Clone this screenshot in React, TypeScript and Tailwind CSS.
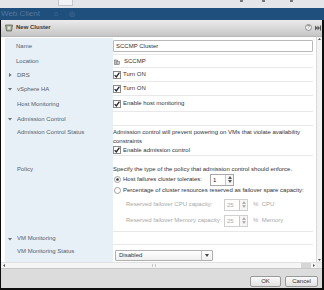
import React from "react";

const Check = () => (
  <svg width="8" height="8" viewBox="0 0 8 8" className="shrink-0">
    <rect x="0.5" y="0.5" width="7" height="7" fill="#fff" stroke="#8a8a8a" />
    <path d="M1.7 4.1 L3.3 5.9 L6.4 1.6" fill="none" stroke="#222" strokeWidth="1.3" />
  </svg>
);

const Radio = ({ on }: { on?: boolean }) => (
  <svg width="7" height="7" viewBox="0 0 7 7" className="shrink-0">
    <circle cx="3.5" cy="3.5" r="3" fill="#fff" stroke="#8a8a8a" strokeWidth="0.8" />
    {on && <circle cx="3.5" cy="3.5" r="1.3" fill="#333" />}
  </svg>
);

const Tri = ({ down }: { down?: boolean }) => (
  <svg width="4" height="4" viewBox="0 0 4 4" className="shrink-0">
    <path d={down ? "M0 1 L4 1 L2 3.5 Z" : "M1 0 L3.5 2 L1 4 Z"} fill="#6a6a6a" />
  </svg>
);

const SpinArrows = ({ dim }: { dim?: boolean }) => (
  <div className="w-[8px] h-full border-l border-[#c8c8c8] flex flex-col items-center justify-center gap-[1px] bg-[#f6f6f6]">
    <svg width="4" height="3" viewBox="0 0 4 3">
      <path d="M0 3 L2 0 L4 3 Z" fill={dim ? "#b0b0b0" : "#555"} />
    </svg>
    <svg width="4" height="3" viewBox="0 0 4 3">
      <path d="M0 0 L4 0 L2 3 Z" fill={dim ? "#b0b0b0" : "#555"} />
    </svg>
  </div>
);

const Spinner = ({ value, dim }: { value: string; dim?: boolean }) => (
  <div
    className={`w-[24px] h-[12px] border ${dim ? "border-[#d0d0d0] text-[#a8a8a8]" : "border-[#a8a8a8] text-[#222]"} bg-white flex items-stretch`}
  >
    <div className="flex-1 pl-[2px] leading-[10px]">{value}</div>
    <SpinArrows dim={dim} />
  </div>
);

const Label = ({
  text,
  arrow,
  sub,
  className = "",
}: {
  text: string;
  arrow?: "right" | "down";
  sub?: boolean;
  className?: string;
}) => (
  <div
    className={`w-[108px] shrink-0 bg-[#e7eff7] text-[#56606a] flex ${
      arrow ? "pl-[3px]" : sub ? "pl-[12px]" : "pl-[11px]"
    } ${className}`}
  >
    {arrow && (
      <span className="w-[4px] mr-[5px] flex items-center h-[9px]">
        <Tri down={arrow === "down"} />
      </span>
    )}
    <span className="leading-[9px]">{text}</span>
  </div>
);

export default function App() {
  return (
    <div className="w-[324px] h-[290px] bg-[#0e0e0e] flex flex-col overflow-hidden font-['Liberation_Sans',Arial,sans-serif] text-[6px]">
      {/* top strip */}
      <div className="h-[8px] bg-[#e3e5e8] flex items-start shrink-0">
        <div className="ml-[58px] w-[15px] h-[6px] border-x border-b border-[#c4c8cc] bg-[#f2f3f4]" />
        <div className="ml-[167px] w-[3px] h-[2px] bg-[#777]" />
        <div className="ml-[19px] w-[3px] h-[2px] bg-[#777]" />
        <div className="ml-[25px] w-[3px] h-[2px] bg-[#777]" />
      </div>
      {/* blue band */}
      <div className="h-[12px] bg-[#1f4f7c] flex items-center shrink-0 text-[#4f78a2] text-[8px] overflow-hidden">
        <span className="ml-[1px] whitespace-nowrap">Web Client</span>
        <span className="ml-[14px] text-[7px]">⌂</span>
        <span className="ml-[11px] text-[7px]">◎</span>
      </div>
      {/* dialog */}
      <div className="flex-1 ml-[1px] mr-[2px] flex flex-col bg-white min-h-0">
        {/* header */}
        <div className="h-[17px] shrink-0 bg-gradient-to-b from-[#ececec] to-[#c5c5c5] flex items-center pb-[1px] border-b border-[#b8b8b8]">
          <svg width="8" height="8" viewBox="0 0 8 8" className="ml-[4px]">
            <path d="M0.5 1 L7.5 1 L6.5 7 L1.5 7 Z" fill="#9aa58e" stroke="#5e6a55" strokeWidth="0.8" />
            <rect x="2.5" y="2.5" width="3" height="3" fill="#dfe6d6" />
          </svg>
          <span className="ml-[3px] font-bold text-[#3a3a3a] leading-[9px]">New Cluster</span>
          <div className="ml-auto flex items-center gap-[3px] mr-[1px]">
            <div className="w-[7px] h-[7px] rounded-full border border-[#8d8d8d] bg-[#f4f4f4] text-[5px] leading-[5px] text-[#666] flex items-center justify-center">
              ?
            </div>
            <svg width="6" height="6" viewBox="0 0 6 6">
              <path d="M0 0.5 L2.5 3 L0 5.5 Z M2.5 0.5 L5 3 L2.5 5.5 Z" fill="#555" />
              <rect x="5" y="0.5" width="1" height="5" fill="#555" />
            </svg>
          </div>
        </div>
        {/* body */}
        <div className="h-[225px] shrink-0 flex">
          <div className="flex-1 pl-[4px] pr-[3px] pt-[1px] flex flex-col">
            {/* Name */}
            <div className="flex h-[16px]">
              <Label text="Name" className="items-center" />
              <div className="flex-1 flex items-center">
                <div className="w-full h-[12px] border border-[#b8b8b8] rounded-[1px] pl-[2px] leading-[10px] text-[#333]">
                  SCCMP Cluster
                </div>
              </div>
            </div>
            {/* Location */}
            <div className="flex h-[14px]">
              <Label text="Location" className="items-center" />
              <div className="flex-1 flex items-center border-t border-b border-[#e8e8e8] pl-[1px] text-[#333]">
                <svg width="6" height="7" viewBox="0 0 6 7">
                  <rect x="0.5" y="2" width="3" height="4.5" fill="#b8b8b8" stroke="#777" strokeWidth="0.6" />
                  <rect x="3" y="3.5" width="2.5" height="3" fill="#d0d0d0" stroke="#777" strokeWidth="0.6" />
                </svg>
                <span className="ml-[4px] leading-[9px]">SCCMP</span>
              </div>
            </div>
            {/* DRS */}
            <div className="flex h-[14px]">
              <Label text="DRS" arrow="right" className="items-center" />
              <div className="flex-1 flex items-center border-b border-[#e8e8e8] text-[#333]">
                <Check />
                <span className="ml-[2px] leading-[9px]">Turn ON</span>
              </div>
            </div>
            {/* vSphere HA */}
            <div className="flex h-[14px]">
              <Label text="vSphere HA" arrow="down" className="items-center" />
              <div className="flex-1 flex items-center border-b border-[#e8e8e8] text-[#333]">
                <Check />
                <span className="ml-[2px] leading-[9px]">Turn ON</span>
              </div>
            </div>
            {/* Host Monitoring */}
            <div className="flex h-[16px]">
              <Label text="Host Monitoring" sub className="items-center" />
              <div className="flex-1 flex items-center border-b border-[#e8e8e8] text-[#333]">
                <Check />
                <span className="ml-[2px] leading-[9px]">Enable host monitoring</span>
              </div>
            </div>
            {/* Admission Control */}
            <div className="flex h-[14px]">
              <Label text="Admission Control" arrow="down" className="items-center" />
              <div className="flex-1 border-b border-[#e8e8e8]" />
            </div>
            {/* Admission Control Status */}
            <div className="flex h-[30px]">
              <Label text="Admission Control Status" sub className="items-start pt-[1.5px]" />
              <div className="flex-1 flex flex-col border-b border-[#e8e8e8] text-[#333] pt-[1.5px]">
                <div className="leading-[9px]">
                  Admission control will prevent powering on VMs that violate availability
                  <br />
                  constraints
                </div>
                <div className="flex items-center h-[10px]">
                  <Check />
                  <span className="ml-[2px] leading-[9px]">Enable admission control</span>
                </div>
              </div>
            </div>
            {/* Policy */}
            <div className="flex h-[76px]">
              <Label text="Policy" sub className="items-start pt-[8.5px]" />
              <div className="flex-1 flex flex-col border-b border-[#e8e8e8] text-[#333] pt-[8.5px]">
                <div className="leading-[9px] whitespace-nowrap">
                  Specify the type of the policy that admission control should enforce.
                </div>
                <div className="flex items-center h-[12px] pl-[1px]">
                  <Radio on />
                  <span className="ml-[2px] leading-[9px]">Host failures cluster tolerates:</span>
                  <div className="ml-[8px]">
                    <Spinner value="1" />
                  </div>
                </div>
                <div className="flex items-center h-[10px] pl-[1px]">
                  <Radio />
                  <span className="ml-[2px] leading-[9px] whitespace-nowrap">
                    Percentage of cluster resources reserved as failover spare capacity:
                  </span>
                </div>
                <div className="flex items-center h-[12px] mt-[3px] pl-[13px] text-[#a8a8a8]">
                  <span className="w-[98px] leading-[9px] whitespace-nowrap">Reserved failover CPU capacity:</span>
                  <Spinner value="25" dim />
                  <span className="ml-[5px] leading-[9px]">%&nbsp; CPU</span>
                </div>
                <div className="flex items-center h-[12px] mt-[4px] pl-[13px] text-[#a8a8a8]">
                  <span className="w-[98px] leading-[9px] whitespace-nowrap">Reserved failover Memory capacity:</span>
                  <Spinner value="25" dim />
                  <span className="ml-[5px] leading-[9px]">%&nbsp; Memory</span>
                </div>
              </div>
            </div>
            {/* VM Monitoring */}
            <div className="flex h-[13px]">
              <Label text="VM Monitoring" arrow="down" className="items-center" />
              <div className="flex-1 border-b border-[#e8e8e8]" />
            </div>
            {/* VM Monitoring Status */}
            <div className="flex h-[17px]">
              <Label text="VM Monitoring Status" sub className="items-start pt-[2px]" />
              <div className="flex-1 pl-[2px] pt-[5px]">
                <div className="w-[98px] h-[11px] border border-[#b0b0b0] rounded-[1px] bg-gradient-to-b from-white to-[#efefef] flex items-stretch text-[#333]">
                  <span className="flex-1 pl-[3px] leading-[9px]">Disabled</span>
                  <div className="w-[11px] border-l border-[#c4c4c4] flex items-center justify-center">
                    <svg width="4" height="3" viewBox="0 0 4 3">
                      <path d="M0 0 L4 0 L2 3 Z" fill="#444" />
                    </svg>
                  </div>
                </div>
              </div>
            </div>
          </div>
          {/* vertical scrollbar */}
          <div className="w-[6px] shrink-0 bg-[#f3f3f3] border-l border-[#dadada] flex flex-col items-center justify-between py-[1px]">
            <svg width="3" height="2" viewBox="0 0 3 2">
              <path d="M0 2 L1.5 0 L3 2 Z" fill="#555" />
            </svg>
            <svg width="3" height="2" viewBox="0 0 3 2">
              <path d="M0 0 L3 0 L1.5 2 Z" fill="#555" />
            </svg>
          </div>
        </div>
        {/* horizontal scrollbar */}
        <div className="h-[6px] shrink-0 flex items-stretch bg-[#f5f5f5] border-t border-[#e0e0e0]">
          <div className="w-[6px] flex items-center justify-center">
            <svg width="2" height="3" viewBox="0 0 2 3">
              <path d="M2 0 L0 1.5 L2 3 Z" fill="#555" />
            </svg>
          </div>
          <div className="flex-1 flex items-center justify-center">
            <div className="w-[4px] h-[3px] border-x border-[#c8c8c8]" />
          </div>
          <div className="w-[10px] bg-[#d6d6d6]" />
          <div className="w-[5px] flex items-center justify-center">
            <svg width="2" height="3" viewBox="0 0 2 3">
              <path d="M0 0 L2 1.5 L0 3 Z" fill="#555" />
            </svg>
          </div>
          <div className="w-[6px] bg-[#ececec]" />
        </div>
        {/* footer */}
        <div className="flex-1 bg-[#dcdcdc] flex items-end justify-end gap-[4px] pb-[1px] pr-[4px] border-t border-[#c8c8c8]">
          <button className="w-[31px] h-[11px] border border-[#9a9a9a] rounded-[2px] bg-gradient-to-b from-[#fafafa] to-[#e2e2e2] text-[#333] text-[6px] leading-[9px]">
            OK
          </button>
          <button className="w-[33px] h-[11px] border border-[#9a9a9a] rounded-[2px] bg-gradient-to-b from-[#fafafa] to-[#e2e2e2] text-[#333] text-[6px] leading-[9px]">
            Cancel
          </button>
        </div>
      </div>
      <div className="h-[2px] shrink-0" />
    </div>
  );
}
